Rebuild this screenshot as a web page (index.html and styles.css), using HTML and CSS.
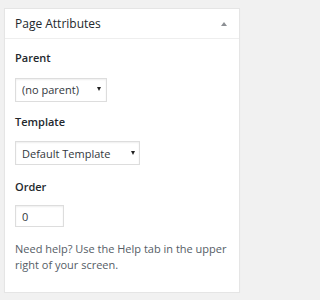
FILE: index.html
```html
<!DOCTYPE html>
<html>
<head>
<meta charset="utf-8">
<link rel="stylesheet" href="styles.css">
</head>
<body>
<div class="postbox">
  <div class="hndle">
    <h2 class="title">Page Attributes</h2>
    <span class="toggle"></span>
  </div>
  <div class="inside">
    <p class="label label-parent"><strong>Parent</strong></p>
    <div class="select select-parent">
      <select><option>(no parent)</option></select>
    </div>
    <p class="label label-template"><strong>Template</strong></p>
    <div class="select select-template">
      <select><option>Default Template</option></select>
    </div>
    <p class="label label-order"><strong>Order</strong></p>
    <input class="order" type="text" value="0">
    <p class="help">Need help? Use the Help tab in the upper right of your screen.</p>
  </div>
</div>
</body>
</html>
```

FILE: styles.css
```css
html, body {
  margin: 0;
  padding: 0;
}
body {
  background: #f1f1f1;
  font-family: "Open Sans", "Liberation Sans", sans-serif;
  padding: 8px 10px 0 4px;
  width: 236px;
}
.postbox {
  box-sizing: border-box;
  width: 236px;
  background: #fff;
  border: 1px solid #e5e5e5;
  box-shadow: 0 1px 1px rgba(0,0,0,.04);
}
.hndle {
  display: flex;
  align-items: center;
  justify-content: space-between;
  height: 29px;
  padding: 0 12px 0 10px;
  border-bottom: 1px solid #eee;
}
.title {
  margin: 0;
  font-size: 12px;
  font-weight: 400;
  color: #23282d;
  line-height: 29px;
}
.toggle {
  width: 0;
  height: 0;
  border-left: 3px solid transparent;
  border-right: 3px solid transparent;
  border-bottom: 4px solid #8c8f94;
}
.inside {
  padding: 11px 10px 19px;
}
.label {
  margin: 0;
  font-size: 11px;
  line-height: 16px;
  color: #23282d;
}
.label strong {
  font-weight: 600;
}
.label-template { margin-top: 12px; }
.label-order { margin-top: 14px; }
.select {
  position: relative;
  display: block;
  margin-top: 11px;
}
.select select {
  -webkit-appearance: none;
  appearance: none;
  box-sizing: border-box;
  height: 24px;
  margin: 0;
  padding: 0 0 0 6px;
  border: 1px solid #ddd;
  border-radius: 0;
  background: #fff;
  box-shadow: inset 0 1px 2px rgba(0,0,0,.07);
  font-family: "Open Sans", "Liberation Sans", sans-serif;
  font-size: 11px;
  color: #32373c;
  outline: none;
}
.select-parent select { width: 92px; }
.select-template select { width: 125px; }
.select::after {
  content: "";
  position: absolute;
  top: 10px;
  width: 0;
  height: 0;
  border-left: 2.5px solid transparent;
  border-right: 2.5px solid transparent;
  border-top: 4px solid #222;
}
.select-parent::after { left: 82px; }
.select-template::after { left: 116px; }
.order {
  display: block;
  box-sizing: border-box;
  width: 49px;
  height: 22px;
  margin: 10px 0 0;
  padding: 0 0 0 6px;
  border: 1px solid #ddd;
  border-radius: 0;
  box-shadow: inset 0 1px 2px rgba(0,0,0,.07);
  font-family: "Open Sans", "Liberation Sans", sans-serif;
  font-size: 11px;
  color: #32373c;
  outline: none;
}
.help {
  margin: 14px 0 0;
  font-size: 11px;
  line-height: 16px;
  color: #555d66;
}
```
